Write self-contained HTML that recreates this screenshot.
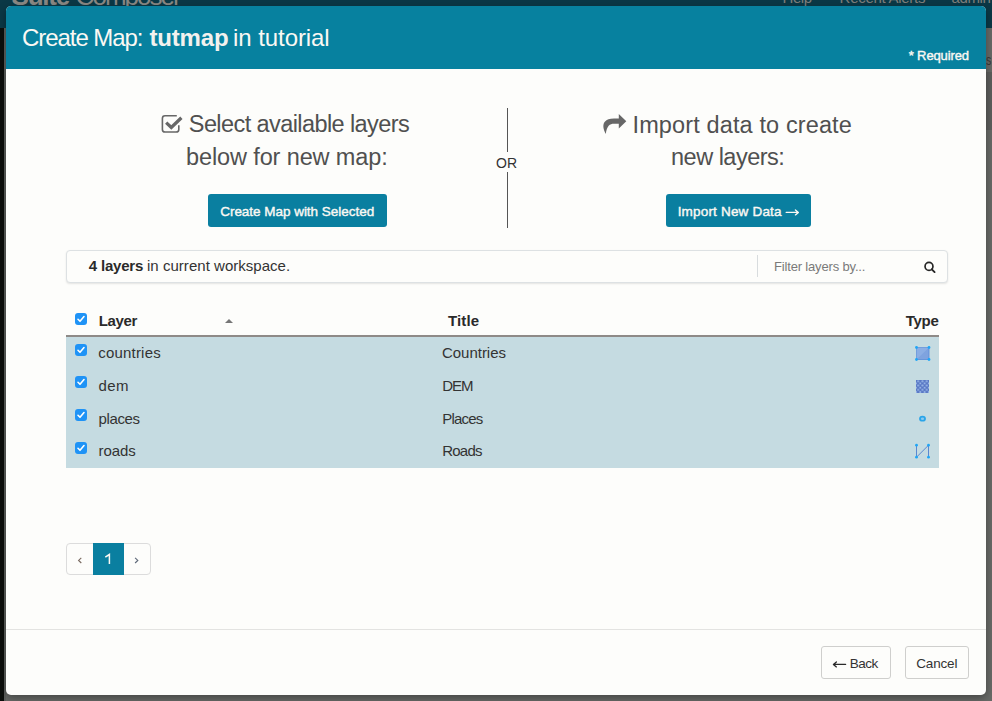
<!DOCTYPE html>
<html><head><meta charset="utf-8">
<style>
*{box-sizing:border-box;margin:0;padding:0}
html,body{width:992px;height:701px;overflow:hidden}
body{position:relative;font-family:"Liberation Sans",sans-serif;background:#686a67;color:#333}
.a{position:absolute;display:block}
.t{position:absolute;white-space:nowrap}
</style></head><body>
<div class="a" style="left:0;top:0;width:992px;height:28px;background:#0b3846"></div>
<div class="a" style="left:0;top:28px;width:4px;height:673px;background:#0b0e0b"></div>
<div class="a" style="left:4px;top:28px;width:2px;height:673px;background:#5c5f5c"></div>
<div class="a" style="left:986px;top:72px;width:6px;height:58px;background:#5d5e5c"></div>
<div class="t" style="left:11.6px;top:-17.0px;font-size:26px;line-height:26px;font-weight:bold;color:#8a8884;letter-spacing:-1.25px">Suite</div>
<div class="t" style="left:75.6px;top:-17.0px;font-size:26px;line-height:26px;font-weight:normal;color:#8a8884;letter-spacing:-1.972px">Composer</div>
<div class="t" style="left:782.6px;top:-10.5px;font-size:15px;line-height:15px;font-weight:normal;color:#807f7b;letter-spacing:-0.467px">Help</div>
<div class="t" style="left:839.6px;top:-10.5px;font-size:15px;line-height:15px;font-weight:normal;color:#807f7b;letter-spacing:-0.283px">Recent Alerts</div>
<div class="t" style="left:951.5px;top:-10.5px;font-size:15px;line-height:15px;font-weight:normal;color:#807f7b;letter-spacing:-0.4px">admin</div>
<div class="t" style="left:986px;top:52px;font-size:15px;line-height:15px;color:#3a3a3a;transform:scaleX(0.7);transform-origin:0 0">s</div>
<!-- modal -->
<div class="a" style="left:6px;top:6px;width:980px;height:689px;background:#fdfdfb;border-radius:5px;overflow:hidden;box-shadow:0 3px 9px rgba(0,0,0,.35)">
  <div class="a" style="left:0;top:0;width:980px;height:63px;background:#07819f"></div>
</div>
<!-- left section -->
<svg class="a" style="left:160px;top:113px" width="25" height="22" viewBox="160 113 25 22">
  <path d="M176.8 115.8 H165 Q162.4 115.8 162.4 118.4 V129.4 Q162.4 132 165 132 H176.2 Q178.8 132 178.8 129.4 V125.2" stroke="#676767" stroke-width="1.6" fill="none"/>
  <path d="M166.2 122.6 L171.3 127.4 L181.4 117.8" stroke="#676767" stroke-width="3.3" fill="none" stroke-linejoin="miter"/>
</svg>
<div class="a" style="left:208px;top:194px;width:179px;height:33px;background:#0a7fa0;border-radius:3px"></div>
<div class="a" style="left:507px;top:108px;width:1px;height:44px;background:#555"></div>
<div class="a" style="left:507px;top:172px;width:1px;height:56px;background:#555"></div>
<!-- right section -->
<svg class="a" style="left:600px;top:110px" width="30" height="28" viewBox="600 110 30 28">
  <path d="M618.8 114 L626.3 121.3 L618.8 128.5 V123.8 H614 C609.8 123.8 606.8 126 605.8 134 C603 129 602.6 124.5 604.8 121.8 C606.8 119.5 609.5 118.6 614 118.6 H618.8 Z" fill="#676767"/>
</svg>
<div class="a" style="left:666px;top:194px;width:145px;height:33px;background:#0a7fa0;border-radius:3px"></div>
<svg class="a" style="left:784px;top:206px" width="18" height="12" viewBox="784 206 18 12">
  <path d="M786.2 212.4 H798.2 M795.4 209.9 L798.4 212.4 L795.4 214.9" stroke="#fbf8f3" stroke-width="1.3" fill="none" stroke-linecap="round" stroke-linejoin="round"/>
</svg>
<!-- filter bar -->
<div class="a" style="left:66px;top:250px;width:882px;height:33px;background:#fdfdfb;border:1px solid #dde1e3;border-radius:4px;box-shadow:0 1px 2px rgba(0,0,0,.10)"></div>
<div class="a" style="left:757px;top:255px;width:1px;height:22px;background:#d8dcde"></div>
<svg class="a" style="left:922px;top:260px" width="16" height="16" viewBox="922 260 16 16">
  <circle cx="929" cy="266.4" r="3.95" stroke="#262626" stroke-width="1.7" fill="none"/>
  <path d="M931.8 269.3 L934.6 272.1" stroke="#262626" stroke-width="1.9" stroke-linecap="round"/>
</svg>
<!-- table -->
<svg class="a" style="left:75px;top:313px" width="12" height="12" viewBox="0 0 12 12"><rect x="0" y="0" width="12" height="12" rx="3" fill="#1f93f6"/><path d="M3 6.3 L5 8.3 L9 3.6" stroke="#fff" stroke-width="1.6" fill="none" stroke-linecap="round" stroke-linejoin="round"/></svg>
<svg class="a" style="left:225px;top:319px" width="8" height="4" viewBox="0 0 8 4"><path d="M0 4 L4 0 L8 4 Z" fill="#767676"/></svg>
<div class="a" style="left:66px;top:335px;width:873px;height:2px;background:#8e8a87"></div>
<div class="a" style="left:66px;top:337px;width:873px;height:131px;background:#c5dbe1"></div>
<svg class="a" style="left:75px;top:344px" width="12" height="12" viewBox="0 0 12 12"><rect x="0" y="0" width="12" height="12" rx="3" fill="#1f93f6"/><path d="M3 6.3 L5 8.3 L9 3.6" stroke="#fff" stroke-width="1.6" fill="none" stroke-linecap="round" stroke-linejoin="round"/></svg>
<svg class="a" style="left:75px;top:376px" width="12" height="12" viewBox="0 0 12 12"><rect x="0" y="0" width="12" height="12" rx="3" fill="#1f93f6"/><path d="M3 6.3 L5 8.3 L9 3.6" stroke="#fff" stroke-width="1.6" fill="none" stroke-linecap="round" stroke-linejoin="round"/></svg>
<svg class="a" style="left:75px;top:409px" width="12" height="12" viewBox="0 0 12 12"><rect x="0" y="0" width="12" height="12" rx="3" fill="#1f93f6"/><path d="M3 6.3 L5 8.3 L9 3.6" stroke="#fff" stroke-width="1.6" fill="none" stroke-linecap="round" stroke-linejoin="round"/></svg>
<svg class="a" style="left:75px;top:442px" width="12" height="12" viewBox="0 0 12 12"><rect x="0" y="0" width="12" height="12" rx="3" fill="#1f93f6"/><path d="M3 6.3 L5 8.3 L9 3.6" stroke="#fff" stroke-width="1.6" fill="none" stroke-linecap="round" stroke-linejoin="round"/></svg>
<svg class="a" style="left:912px;top:343px" width="22" height="120" viewBox="912 343 22 120">
  <defs><pattern id="chk" x="916" y="380" width="4.3" height="4.3" patternUnits="userSpaceOnUse"><rect width="4.3" height="4.3" fill="#5877c4"/><circle cx="2.15" cy="1.2" r="1.05" fill="#95b3e6"/><circle cx="0" cy="3.35" r="1.05" fill="#95b3e6"/><circle cx="4.3" cy="3.35" r="1.05" fill="#95b3e6"/></pattern></defs>
  <rect x="916.5" y="347.5" width="12.5" height="12" fill="#7fa3df" stroke="#5a8ad8" stroke-width="0.8"/>
  <path d="M916.5 347.5 L929 347.5 L916.5 359.5Z" fill="#95b6e8" opacity="0.6"/>
  <circle cx="916.5" cy="347.5" r="1.4" fill="#1fa6f6"/><circle cx="929" cy="347.5" r="1.4" fill="#1fa6f6"/>
  <circle cx="916.5" cy="359.5" r="1.4" fill="#1fa6f6"/><circle cx="929" cy="359.5" r="1.4" fill="#1fa6f6"/>
  <rect x="916" y="380" width="13" height="13" fill="url(#chk)"/>
  <ellipse cx="922.5" cy="418.7" rx="3.4" ry="2.9" fill="#2aa5e9"/>
  <ellipse cx="922.5" cy="418.7" rx="1.6" ry="1.2" fill="#8cc9ef"/>
  <path d="M916.5 445.2 L916.5 457.2 L928.5 445.2 L928.5 457.2" stroke="#5a88d0" stroke-width="1" fill="none"/>
  <circle cx="916.5" cy="445.2" r="1.4" fill="#1fa6f6"/><circle cx="928.5" cy="445.2" r="1.4" fill="#1fa6f6"/>
  <circle cx="916.5" cy="457.2" r="1.4" fill="#1fa6f6"/><circle cx="928.5" cy="457.2" r="1.4" fill="#1fa6f6"/>
</svg>
<!-- pagination -->
<div class="a" style="left:66px;top:543px;width:85px;height:32px;border:1px solid #dcdcdc;border-radius:4px"></div>
<div class="a" style="left:93px;top:543px;width:31px;height:32px;background:#0a7fa0"></div>
<svg class="a" style="left:76px;top:556px" width="64" height="9" viewBox="76 556 64 9">
  <path d="M81.3 557.8 L78.6 560.4 L81.3 563" stroke="#7a6a60" stroke-width="1.15" fill="none"/>
  <path d="M135.1 557.8 L137.8 560.4 L135.1 563" stroke="#606a7a" stroke-width="1.15" fill="none"/>
</svg>
<svg class="a" style="left:100px;top:550px" width="16" height="18" viewBox="100 550 16 18">
  <path d="M105.3 557.2 L109.4 554.5 V564" stroke="#fbf8f3" stroke-width="1.5" fill="none" stroke-linejoin="miter"/>
</svg>
<!-- footer -->
<div class="a" style="left:6px;top:629px;width:980px;height:1px;background:#e3e3e1"></div>
<div class="a" style="left:821px;top:646px;width:70px;height:33px;border:1px solid #cfcfcd;border-radius:3px"></div>
<div class="a" style="left:905px;top:646px;width:64px;height:33px;border:1px solid #cfcfcd;border-radius:3px"></div>
<svg class="a" style="left:830px;top:658px" width="18" height="12" viewBox="830 658 18 12">
  <path d="M845.6 664.4 H833.6 M836.4 661.9 L833.4 664.4 L836.4 666.9" stroke="#2a2a2a" stroke-width="1.3" fill="none" stroke-linecap="round" stroke-linejoin="round"/>
</svg>
<div class="t" style="left:22.0px;top:26.0px;font-size:24px;line-height:24px;font-weight:normal;color:#fbf8f3;letter-spacing:-1.06px">Create Map:</div>
<div class="t" style="left:149.4px;top:26.0px;font-size:24px;line-height:24px;font-weight:bold;color:#f3f1ee;letter-spacing:-0.14px">tutmap</div>
<div class="t" style="left:233.1px;top:26.0px;font-size:24px;line-height:24px;font-weight:normal;color:#fbf8f3;letter-spacing:-0.08px">in tutorial</div>
<div class="t" style="left:908.7px;top:48.8px;font-size:13px;line-height:13px;font-weight:normal;-webkit-text-stroke:0.4px currentColor;color:#fbf8f3;letter-spacing:-0.123px">* Required</div>
<div class="t" style="left:188.8px;top:113.4px;font-size:23.5px;line-height:23.5px;font-weight:normal;color:#505050;letter-spacing:-0.587px">Select available layers</div>
<div class="t" style="left:186.0px;top:145.5px;font-size:23.5px;line-height:23.5px;font-weight:normal;color:#505050;letter-spacing:-0.118px">below for new map:</div>
<div class="t" style="left:220.2px;top:204.7px;font-size:13.5px;line-height:13.5px;font-weight:normal;-webkit-text-stroke:0.4px currentColor;color:#fbf8f3;letter-spacing:-0.027px">Create Map with Selected</div>
<div class="t" style="left:496.0px;top:155.5px;font-size:14px;line-height:14px;font-weight:normal;color:#333;letter-spacing:0.0px">OR</div>
<div class="t" style="left:632.5px;top:113.8px;font-size:23.5px;line-height:23.5px;font-weight:normal;color:#505050;letter-spacing:0.125px">Import data to create</div>
<div class="t" style="left:671.0px;top:145.5px;font-size:23.5px;line-height:23.5px;font-weight:normal;color:#505050;letter-spacing:-0.5px">new layers:</div>
<div class="t" style="left:677.7px;top:204.7px;font-size:13.5px;line-height:13.5px;font-weight:normal;-webkit-text-stroke:0.4px currentColor;color:#fbf8f3;letter-spacing:0.185px">Import New Data</div>
<div class="t" style="left:88.8px;top:257.7px;font-size:15px;line-height:15px;font-weight:bold;color:#2a2a2a;letter-spacing:-0.199px">4 layers</div>
<div class="t" style="left:147.0px;top:257.7px;font-size:15px;line-height:15px;font-weight:normal;color:#333;letter-spacing:0.03px">in current workspace.</div>
<div class="t" style="left:774.0px;top:259.8px;font-size:13px;line-height:13px;font-weight:normal;color:#7a7a7a;letter-spacing:-0.167px">Filter layers by...</div>
<div class="t" style="left:98.8px;top:313.0px;font-size:15px;line-height:15px;font-weight:bold;color:#2a2a2a;letter-spacing:-0.35px">Layer</div>
<div class="t" style="left:448.1px;top:313.0px;font-size:15px;line-height:15px;font-weight:bold;color:#2a2a2a;letter-spacing:0.1px">Title</div>
<div class="t" style="left:905.8px;top:313.0px;font-size:15px;line-height:15px;font-weight:bold;color:#2a2a2a;letter-spacing:-0.3px">Type</div>
<div class="t" style="left:98.3px;top:345.0px;font-size:15px;line-height:15px;font-weight:normal;color:#333;letter-spacing:0.189px">countries</div>
<div class="t" style="left:442.0px;top:345.0px;font-size:15px;line-height:15px;font-weight:normal;color:#333;letter-spacing:-0.025px">Countries</div>
<div class="t" style="left:98.5px;top:378.0px;font-size:15px;line-height:15px;font-weight:normal;color:#333;letter-spacing:0.4px">dem</div>
<div class="t" style="left:442.2px;top:378.0px;font-size:15px;line-height:15px;font-weight:normal;color:#333;letter-spacing:-1.0px">DEM</div>
<div class="t" style="left:98.5px;top:411.0px;font-size:15px;line-height:15px;font-weight:normal;color:#333;letter-spacing:-0.36px">places</div>
<div class="t" style="left:442.2px;top:411.0px;font-size:15px;line-height:15px;font-weight:normal;color:#333;letter-spacing:-0.8px">Places</div>
<div class="t" style="left:98.5px;top:442.8px;font-size:15px;line-height:15px;font-weight:normal;color:#333;letter-spacing:-0.075px">roads</div>
<div class="t" style="left:442.2px;top:442.8px;font-size:15px;line-height:15px;font-weight:normal;color:#333;letter-spacing:-0.775px">Roads</div>
<div class="t" style="left:849.7px;top:656.6px;font-size:13.5px;line-height:13.5px;font-weight:normal;color:#333;letter-spacing:-0.5px">Back</div>
<div class="t" style="left:916.3px;top:656.6px;font-size:13.5px;line-height:13.5px;font-weight:normal;color:#333;letter-spacing:-0.18px">Cancel</div>
</body></html>
